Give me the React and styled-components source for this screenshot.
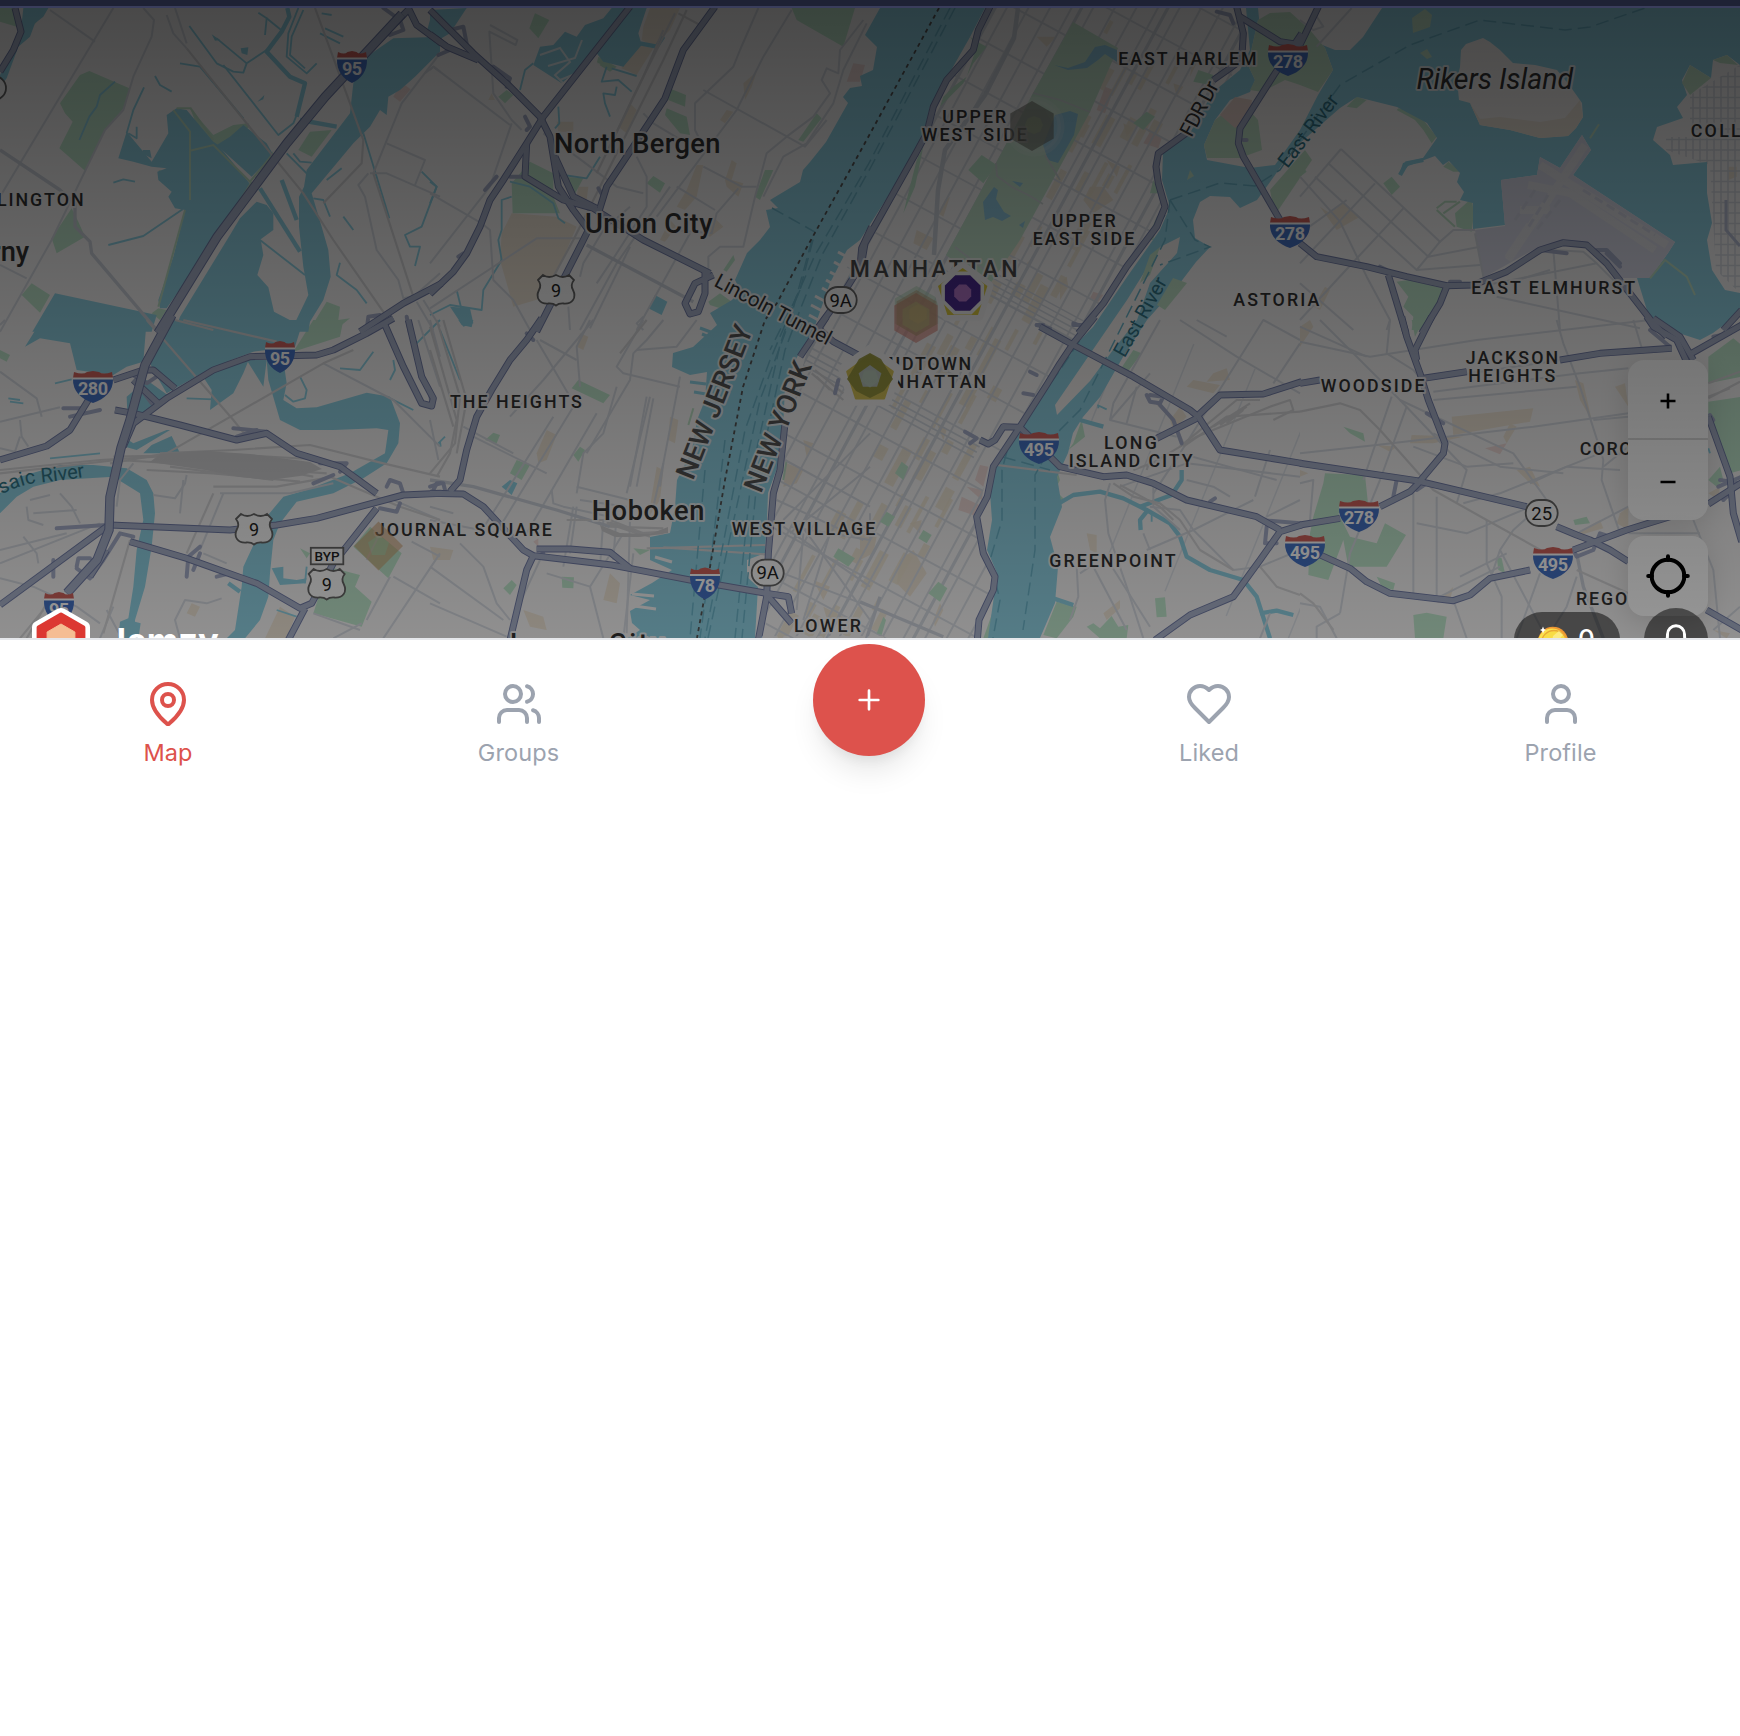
import React from "react";
import styled, { createGlobalStyle } from "styled-components";

const GlobalStyle = createGlobalStyle`
  * { box-sizing: border-box; }
  body { margin: 0; background: #fff; font-family: Inter, "Liberation Sans", sans-serif; }
  button { border: 0; padding: 0; background: none; font: inherit; color: inherit; cursor: pointer; }
`;

const Page = styled.main`
  display: flex;
  flex-direction: column;
  min-height: 1736px;
  background: #fff;
`;
const TopStrip = styled.div`
  height: 8px;
  background: #1e2235;
  border-bottom: 2px solid #3a3e5c;
`;
const MapStage = styled.section`
  position: relative;
  height: 630px;
  overflow: hidden;
  background: #f5f4f4;
`;
const MapCanvas = styled.svg`
  display: block;
  width: 1740px;
  height: 630px;
`;
const Shade = styled.div`
  position: absolute;
  inset: 0;
  background: linear-gradient(to bottom, rgba(0, 0, 0, 0.7), rgba(0, 0, 0, 0.41));
  pointer-events: none;
`;
const MapControls = styled.div`
  position: absolute;
  top: 352px;
  right: 32px;
  width: 80px;
  display: flex;
  flex-direction: column;
  gap: 16px;
`;
const ControlCard = styled.div`
  display: flex;
  flex-direction: column;
  border-radius: 16px;
  overflow: hidden;
  background: #fff;
  box-shadow: 0 6px 30px rgba(0, 0, 0, 0.14);
`;
const ControlButton = styled.button`
  height: ${(p) => p.$height || 80}px;
  padding-top: ${(p) => p.$drop || 0}px;
  display: flex;
  align-items: center;
  justify-content: center;
  color: #000;
  & + & { border-top: 2px solid #dcdcdc; }
`;
const Brand = styled.div`
  position: absolute;
  left: 31px;
  top: 598px;
  display: flex;
  align-items: center;
  gap: 15px;
  height: 68px;
  color: #fff;
  font-size: 34.5px;
  font-weight: 700;
`;
const Badges = styled.div`
  position: absolute;
  right: 32px;
  top: 600px;
  display: flex;
  align-items: flex-start;
  gap: 24px;
  height: 64px;
  color: #fff;
`;
const CoinPill = styled.div`
  width: 106px;
  height: 60px;
  margin-top: 4px;
  border-radius: 28px;
  background: rgba(0, 0, 0, 0.5);
  display: flex;
  align-items: center;
  padding: 0 0 0 23px;
  gap: 9px;
  font-size: 26px;
  font-weight: 500;
`;
const CoinCount = styled.span`
  display: block;
  line-height: 32px;
  margin-top: -6px;
`;
const BellCircle = styled.div`
  width: 64px;
  height: 64px;
  border-radius: 50%;
  background: rgba(0, 0, 0, 0.5);
  display: flex;
  align-items: center;
  justify-content: center;
`;
const NavBar = styled.nav`
  height: 162px;
  border-top: 2px solid #e5e7eb;
  background: #fff;
  display: grid;
  grid-template-columns: 336px 365px 336px 344px 359px;
`;
const NavItem = styled.a`
  display: flex;
  flex-direction: column;
  align-items: center;
  padding-top: 40px;
  gap: 9px;
  color: ${(p) => (p.$active ? "#dd524c" : "#9ca3af")};
  font-size: 23.5px;
  line-height: 32px;
  letter-spacing: 0.1px;
`;
const AddButton = styled.button`
  justify-self: center;
  width: 112px;
  height: 112px;
  margin-top: 4px;
  border-radius: 50%;
  background: #dd524c;
  color: #fff;
  display: flex;
  align-items: center;
  justify-content: center;
  box-shadow: 0 20px 30px -6px rgba(0, 0, 0, 0.1), 0 8px 12px -4px rgba(0, 0, 0, 0.06);
`;

const LineIcon = ({ size = 48, children, weight = 2 }) => (
  <svg width={size} height={size} viewBox="0 0 24 24" fill="none" stroke="currentColor"
    strokeWidth={weight} strokeLinecap="round" strokeLinejoin="round">{children}</svg>
);

/* Map geometry is kept in eight sheets, each drawn at three times its final size. */
const sheets = [
  { x: 0, y: 0,
    water: [
      "M70,24L145,24 130,50 105,70 90,110 55,140 20,235 0,260 0,225 45,130 62,100Z",
      "M500,345L530,325 560,330 640,425 655,435 745,545 755,560 500,925 480,925 475,900 520,770 555,630 525,625 505,590 515,575 475,540 472,515 500,505 455,500 400,485 355,475 380,395 455,485 505,400Z",
      "M690,410L730,375 800,430 820,465 755,530 650,435Z",
      "M525,995L540,950 690,705 720,655 770,605 800,615 820,640 820,690 782,718 790,765 772,825 805,862 822,935 885,968 925,885 910,800 897,680 897,590 912,560 920,510 1050,340 1060,250 1070,220 1100,170 1180,115 1280,112 1320,95 1320,155 1245,230 1200,270 1165,290 1160,345 1140,330 1110,380 1060,430 985,520 935,580 965,680 985,750 992,830 970,900 930,965 925,995Z",
      "M165,880L470,945 455,995 97,995Z", "M1290,60L1325,30 1325,135 1280,95Z",
      "M635,103L660,120 645,122Z M722,145L745,142 742,165 725,160Z M772,305L793,285 790,298Z M428,450L450,450 455,475 430,462Z"],
    creeks: ["M862,24L868,50 845,95 800,155 870,230 915,250 890,350", "M780,565L900,755","M845,540L890,660","M900,360L1010,380"],
    streams: ["M568,78L650,190 700,215 730,218 740,190 800,150","M670,195L835,405 880,370 890,345","M540,190L600,200 730,355","M650,115L740,190","M325,735L430,708 548,628","M1090,400L1168,655","M775,38L800,55 795,105","M800,55L850,95","M895,24L865,100 860,170 920,220 950,190","M910,30L875,110 870,165 915,205","M960,100L1020,130 M975,85L1030,110 M965,40L995,45","M465,228L480,255 515,275","M340,548L370,538 405,545","M432,262L400,330 380,400","M238,420L268,350 290,320 300,285 345,245","M860,460L925,525","M880,460L900,485 935,488","M780,720L915,825","M1020,788L1010,825 1070,870 1100,910","M940,595L970,600 990,650","M1265,515L1310,560 1265,680 1215,705 1230,740 1260,740 1245,798","M1030,650L1060,690","M385,400L410,415 410,380","M1000,480 L940,560 M1025,505L980,540","M1245,170L1262,185"],
    parks: ["M180,310L240,225 268,213 388,265 375,320 315,390 255,512 178,445 218,365 195,340Z","M72,24L145,24 105,72 90,75Z","M0,24L45,24 50,80 0,65Z","M155,715L215,625 235,665 255,710 170,760Z","M65,885L95,850 150,885 120,938Z","M925,995L980,905 1020,920 1015,960 1050,955 1000,995Z","M895,450L930,395 995,390 935,470Z","M570,325L640,405 700,375 745,370 750,380 700,410 640,440 600,400Z","M740,460L820,455 800,480 745,490Z","M475,510L500,515 500,535Z","M720,480L750,478 750,490 725,490Z","M455,940L475,925 500,930 480,960Z"],
    blobs: [],
    pink: ["M1180,290L1205,248 1232,268 1200,305Z"],
    rim: ["M520,330L570,395 570,600","M570,452L640,435 750,545 820,460","M555,630L475,920","M755,545L690,650 520,925","M530,325L572,325 640,420"],
    roads: ["M340,24L0,590","M150,30L285,125","M430,24L462,60 455,110 400,230 370,330 315,390 155,720 0,995","M1320,160L1205,310 1120,520","M1160,430L1275,480 1245,555","M1110,520L1160,520 1320,590","M1105,520L1075,555 1095,590 1130,750 1195,840 1210,895 1280,880","M1275,220L1300,200 1320,215","M0,795L80,835","M525,24L560,130 M500,45L520,100 560,145","M1320,820L1240,890","M1250,905L1300,990 M1270,900L1320,980"],
    arterials: ["M0,450L180,570 225,610 225,680 270,725 275,760 470,990"],
    rails: ["M560,145L820,470 910,580 1000,720 1160,950","M945,24L1050,310 1090,420 1085,490 970,610","M1120,520L1240,890","M525,960L640,990"],
    highways: ["M45,24L63,95 40,150 0,215","M1225,24L1250,75 1325,130","M1325,850L1210,910 1080,995","M1230,24L1030,230 975,290 860,430 780,540 650,710 475,1000"],
    ramps: ["M1150,24L1200,60 1210,90 1170,105","M1100,990L1105,950 1140,945 1160,970","M1220,950L1230,1000"] },
  { x: 430, y: 0,
    water: ["M0,30L110,24 60,100 0,135Z","M405,95L440,110 465,75 520,55 545,24 650,24 625,100 635,135 580,200 520,185 500,160 395,250 310,195 330,140 370,135Z","M60,920L120,925 130,970 100,980Z","M675,885L712,905 695,945 655,925Z","M540,150L600,160 580,200Z"],
    creeks: ["M630,130L680,140 700,110"],
    streams: ["M545,205L620,228 M530,200L515,245 565,240 605,275 M560,260L555,285 520,280 525,310 540,350","M385,320L388,370 375,385","M215,780L205,720 215,690 215,600 245,590","M240,545L300,560 370,610 385,655 405,670","M215,780L160,870 155,930 60,915 0,945","M310,190L285,210 270,270","M400,525L470,535 510,470","M0,545L20,560 0,610","M80,870L95,930"],
    parks: ["M298,85L315,40 358,60 325,115Z","M1085,24L1275,24 1240,140 1100,60Z","M718,265L768,285 765,320 715,300Z","M710,325L770,350 780,405 750,400 705,345Z","M650,550L670,528 705,550 690,578Z","M245,550L300,485 370,520 370,590 390,640 248,640Z","M205,290L230,270 250,285 225,310Z","M400,530L460,535 430,590Z","M505,170L560,200 540,215 500,190Z","M1105,420L1160,340 1175,355 1120,425Z","M975,590L1005,510 1030,510 990,600Z","M880,810L910,765 915,780 890,815Z","M835,905L870,880 905,905 870,925 840,915Z"],
    blobs: ["M640,80L660,24 750,24 720,90 670,140 635,120Z","M600,130L670,145 620,225 575,205Z","M245,640L380,650 440,680 350,890 250,920 210,780 215,700Z","M445,560L475,560 470,600 440,590Z","M380,365L430,365 430,395 385,395Z","M820,495L800,590 765,630 740,620 770,570 800,495Z","M885,540L905,480 920,490 905,540 940,550 925,590 890,560Z","M940,250L980,215 965,260 945,300Z","M565,380L600,310 620,330 590,400Z","M870,360L890,330 910,335 885,370Z","M175,300L185,280 195,300Z","M690,720L720,660 740,680 705,725Z","M820,700L850,650 880,680 840,710Z"],
    pink: ["M1250,245L1270,190 1305,195 1290,245Z"],
    rim: [],
    roads: ["M180,75L262,120 257,135 178,95 190,280 245,360 275,390","M0,210L10,200 240,375","M985,24L930,150 910,200 795,310 795,390 830,460","M1085,30L1000,170 920,330 680,650","M820,270L1125,440 1190,360","M0,580L155,670 180,690 190,840 250,900 300,990","M245,370L180,560 0,790","M640,340L670,370 770,430","M620,470L650,530 650,620 560,760 500,850","M820,500L935,560 980,560","M640,580L560,560 440,470 340,400","M925,565L860,640 845,700 735,690","M740,560L855,630","M1300,60L1230,150 1225,220 1190,205 1175,240 1200,280 1150,350 1070,410 1010,460 975,590 940,740 870,740 835,770 835,830","M1310,70L1240,210 1210,310 1130,430 1060,470 1000,590","M0,925L320,715 450,715","M450,830L460,790 520,690 600,620","M415,920L420,990 M450,990L560,790 720,560","M620,990L780,700","M480,985L600,740","M640,950L620,970 640,990"],
    arterials: ["M470,735L790,905"],
    rails: ["M770,30L700,180 580,420 430,720 370,830","M735,40L610,290 540,440","M745,40L810,75","M700,90L640,230 500,520"],
    highways: ["M0,103L50,140 145,180","M0,30L130,160 230,250 330,350 360,410 385,560 430,630 475,690 460,720 320,995","M600,20L340,350 290,430 220,540 180,600 150,680 110,760 70,815 0,882","M855,20L760,150 705,295 590,470 530,560 505,640","M290,430L285,530 400,600 490,625 640,720 840,820","M850,825L795,850 765,910 780,942 805,935 825,880 825,815","M375,470L430,590 500,625","M1325,680L1295,745 1290,800 1240,880 1155,995"],
    ramps: ["M60,90L100,80 110,130","M25,165L60,150","M190,200L240,235 230,260","M285,350L300,380 290,390","M240,530L280,530","M165,570L200,530","M505,565L520,590","M85,770L100,760"] },
  { x: 860, y: 0,
    water: [],
    creeks: [], streams: [],
    parks: ["M330,110L350,140 320,230 280,260 250,290 240,320 310,250 340,190 380,140 360,130Z","M325,510L365,465 410,495 370,550Z","M860,335L885,350 850,390 820,370Z","M1015,210L1060,225 1050,255 1000,245Z","M170,480L190,440 165,560 130,640Z","M880,540L900,580 870,580Z","M900,640L880,720 860,720 890,650Z"],
    blobs: ["M690,560L730,560 760,600 700,640 670,600Z","M170,690L220,715 200,750 160,730Z","M530,110L590,110 560,140Z","M255,600L270,590 250,650 235,640Z","M500,790L520,770 510,800Z","M600,850L620,830 625,860 600,900Z","M740,480L780,500 770,530Z","M1000,160L1020,170 990,230Z","M940,250L970,260 950,290Z","M790,370L820,385 800,410Z"],
    pink: ["M710,330L735,260 760,270 735,340Z","M850,430L870,395 905,415 895,445Z","M700,875L730,885 715,905 690,895Z"],
    rim: [],
    roads: [],
    arterials: [],
    rails: [],
    highways: ["M390,20L355,90 340,150 260,240 220,320 200,400 170,455 60,650 15,730 5,790 -10,830","M1130,20L1150,100 1145,180 1060,240","M985,395L895,460 888,500 895,550 915,620 890,680 800,800 730,910 655,1000","M1140,50L1260,125 1325,135","M1325,100L1245,220 1140,385 1135,430 1150,470 1260,660"],
    ramps: ["M1070,35L1110,45 1120,70","M530,975L570,985","M640,975L670,975","M1150,420L1160,420"] },
  { x: 1300, y: 0,
    water: [],
    creeks: ["M370,480L320,490 300,525"], streams: [],
    parks: ["M295,325L350,335 410,410 395,430 370,390 345,360 290,330Z","M140,320L170,290 200,300 170,325Z","M250,550L275,530 300,560 275,585Z","M0,490L20,515 0,530Z","M430,500L445,485 485,515 460,515Z","M465,640L515,595 522,640 515,695 470,680Z","M290,845L325,840 430,865 415,920 370,990 335,990 340,950 310,920 325,890Z"],
    blobs: ["M725,24L840,24 830,50 785,55 725,45Z","M595,24L650,24 620,35Z","M60,620L90,640 130,610 180,650 110,690Z","M1285,500L1310,500 1310,530 1285,540Z","M75,860L90,870 60,930 40,920Z","M60,880L30,950"],
    pink: [], rim: ["M410,625L435,605 470,605","M410,630L465,680","M430,640L480,605","M1050,835L1095,780 1160,830 1185,885","M870,415L897,373"],
    roads: ["M123,447L0,590","M123,447L420,725 460,690 525,690","M85,490L385,770 540,740","M45,530L350,810 540,795","M225,550L0,790","M310,625L110,840 0,960","M420,725L350,810","M0,530L120,665 200,830 270,960 260,990","M525,700L550,830","M0,60L40,90 70,80 50,50","M155,24L50,140","M560,855L890,790 850,755 760,750 780,990","M590,890L1020,985","M620,850L750,810","M0,850L160,990","M890,790L1000,900","M0,700L140,600"],
    arterials: [], rails: [],
    highways: ["M55,20L0,135","M0,730L50,770 200,800 320,830 440,857 520,855 620,815 720,750 790,728 860,735 920,790 990,880 1060,970 1100,1010","M265,825L318,1000","M440,860L420,910 365,1000","M1325,930L1270,990"],
    ramps: ["M240,800L260,810","M890,750L920,750 960,790","M920,760L960,800","M450,845L480,845","M720,750L800,760"] },
  { x: 0, y: 320,
    water: ["M125,0L440,0 430,125 380,140 340,165 230,150 210,70 120,55 75,80Z","M520,0L910,0 885,80 760,95 640,140 500,220 460,150 445,120Z","M380,230L440,180 510,230 400,300 375,380 410,390 510,330 500,330 400,370 385,360Z","M430,400L540,400 515,348 455,375Z","M805,180L800,120 850,120 860,190 850,240 890,265 950,262 1100,218 1170,230 1200,310 1195,370 1160,430 1090,475 1000,520 890,545 840,610 820,660 810,760 805,830 780,900 735,955 680,955 705,930 725,800 730,740 800,590 850,530 920,510 1050,460 1155,400 1165,330 1130,325 1000,330 900,330 840,300Z","M0,520L60,470 180,435 280,435 380,445 440,480 460,520 465,580 455,680 440,770 435,800 405,900 405,905 422,910 415,955 355,955 360,905 385,895 400,800 410,690 430,600 420,520 340,470 180,480 100,500 50,530 0,580Z","M590,140L750,110 730,160 700,220 630,270 635,210Z","M740,120L800,120 790,200Z","M815,745L850,740 850,775 890,780 920,775 915,790 840,795Z"],
    creeks: ["M685,790L720,815"],
    streams: ["M165,190L215,178","M30,245L70,250 M25,235L60,240","M855,225L880,245 915,235 920,210 900,170","M1020,145L1080,150 1120,95","M1180,120L1185,150 1170,180","M1160,230L1240,270","M560,235L640,238","M915,790L920,740","M830,870L890,890","M300,400L150,415","M1320,0L1240,80"],
    parks: ["M880,95L940,0 1030,0 1020,50Z","M0,90L30,105 20,125 0,115Z","M985,740L1080,765 1065,800 1115,845 1085,920 940,880Z","M1060,680L1110,620 1205,700 1165,775Z","M900,685L930,700 920,715Z"],
    blobs: ["M560,880L575,850 600,860 585,890Z","M840,860L885,890 860,955 795,955Z","M1300,690L1320,690 1310,715Z"],
    pink: [], rim: [],
    roads: ["M0,15L15,0","M0,155L110,235 125,290","M0,305L180,262","M60,300L65,350 85,380 M60,350L45,395 0,385","M80,560L85,600 130,615 M90,540L150,525 M180,520L215,560 240,610 M100,580L230,570","M400,430L360,480 350,560","M460,525L525,535 555,490 560,465","M540,580L550,480 M660,520L870,520 1000,490","M670,520L600,690","M610,700L680,730","M0,730L300,610 M0,690L200,640","M0,775L100,800 230,860 300,910","M540,955L525,900 555,840 620,850 665,835","M1170,770L1100,900 M1140,640L1100,720","M1320,700L1150,955 M1180,770L1320,850 M1235,665L1320,710 M1085,910L1000,955 M940,880L1080,930","M1180,540L1320,600","M365,955L320,870 M300,955L340,860","M70,650L110,700 115,730","M970,130L1180,240 1320,380","M1255,0L1320,200 M1290,0L1320,110"],
    arterials: [],
    rails: ["M0,450L300,420 640,400 980,420","M0,460L350,420 700,440 980,460","M340,410L620,405 940,440","M440,450L640,460 900,485","M480,400L700,390 930,375 1150,430 1320,470","M330,430L500,400 970,130 1060,90","M510,440L820,480 M600,455L850,470 M650,400L800,450 M560,400L780,430 M620,410L940,470","M640,500L830,500 1000,470","M550,0L830,65 M440,0L570,150 700,300 740,350","M60,955L130,870 M80,955L140,850","M390,660L310,940","M990,470L1200,560 1320,600","M640,520L560,700"],
    highways: ["M0,420L140,378 210,330 265,240","M340,180L430,150 460,150 525,205","M345,270L400,280 540,315 710,360 800,340 890,400 1020,440 1130,520","M390,665L560,715 770,790 900,865 935,850 1000,730 1130,565","M915,865L865,960","M0,855L320,620","M330,615L690,630 830,615 950,595 1210,525 1325,520","M1180,-5L1100,40 1000,90 950,105 750,110 640,150 500,235 400,310 370,380","M515,-10L440,120 390,300 360,390 330,530 325,640 290,720 200,820","M1155,15L1210,140 1265,250 1295,258 1300,235 1265,170 1225,0","M400,180L480,255","M270,770L320,690"],
    ramps: ["M190,265L250,265 220,310","M210,290L300,270","M390,160L440,190 470,170","M410,190L455,250","M700,325L800,335","M710,350L770,330","M960,430L1040,430 1020,455","M940,490L1000,465","M1160,500L1170,480 1200,490 1210,520","M230,740L235,715 270,715","M230,745L270,775 310,720 360,640 400,650","M560,770L565,710 600,680","M580,750L600,700","M650,770L690,760","M170,625L320,615","M1290,500L1320,490","M160,720L160,770","M1140,565L1190,575 1200,550"] },
  { x: 430, y: 320,
    water: ["M215,500L240,480 262,490 245,525Z","M85,0L130,0 125,22 95,15Z"],
    creeks: [], streams: ["M30,30L90,180","M25,370L45,350 M30,365L32,380"],
    parks: ["M425,205L445,180 540,225 520,250Z","M165,360L190,338 210,345 200,370Z","M240,460L260,420 300,435 275,480Z","M430,405L450,380 465,390 445,425Z","M395,770L432,772 430,805 397,803Z","M220,805L245,780 260,795 240,825Z","M1210,710L1225,685 1275,715 1255,740Z","M610,685L660,690 630,705Z"],
    blobs: ["M320,400L350,330 380,345 350,420 325,430Z","M520,840L540,760 570,790 560,850Z","M660,560L680,440 700,450 690,540 650,600Z","M1070,430L1120,450 1100,490 1060,500Z","M440,80L450,40 475,50 460,90Z","M280,870L340,890 350,930 300,920Z","M720,290L745,300 735,370 715,360Z","M0,680L70,690 60,720 10,720Z","M1180,860L1240,890 1200,930Z","M1150,780L1200,800 1180,840Z","M1120,360L1150,370 1130,410Z"],
    pink: ["M310,665L325,655 325,680Z"], rim: ["M790,265L775,315","M1070,420L1060,480"],
    roads: ["M490,0L340,180 240,290","M330,60L440,120","M640,0L560,140 580,160 750,200","M700,0L650,60 610,100 600,180 470,400","M800,0L740,80 620,90","M660,230L590,520 M750,170L700,430 690,500","M650,230L600,500 M670,235L620,500","M440,520L460,400 520,340 560,200","M440,500L600,540 M450,540L590,560","M320,60L420,230 M480,0L440,80 450,200","M130,350L350,460 M100,320L250,400","M430,260L210,620 M370,290L150,640","M500,280L290,640","M0,600L200,640 M70,580L0,560","M0,740L220,900 M90,670L160,740 200,850 240,900","M520,600L510,740 M600,600L590,940 M430,560L400,740","M0,850L230,950 M330,720L260,870","M350,760L480,800 520,955 M480,800L580,640","M365,510L370,550 400,560 540,590","M1065,420L1320,560 M1040,540L1300,660","M1080,620L1320,660 1320,580","M1320,340L1060,600 M1320,440L1080,640","M1110,610L1320,900 M1060,760L1320,860 M1120,640L1100,870","M1060,620L1320,800 M1200,640L1120,900","M610,700L580,955 M0,300L25,420","M440,560L420,700 M560,580L550,720","M700,430L670,560"],
    arterials: ["M0,480L130,500 380,570 540,620"],
    rails: ["M0,20L80,300 60,400 20,470","M20,0L90,230 75,370 0,460","M0,90L70,320 M40,0L110,240 80,400","M410,600L540,600 640,640 700,640","M530,610L620,640 710,635 M540,620L700,625 M520,600L660,650","M650,685L1005,675 M700,682L1005,703","M1145,160L1240,240 M1155,150L1240,220","M1160,170L1200,210","M650,0L570,100"],
    highways: ["M335,-5L290,60 240,120 185,210 140,290 110,390 90,480 60,515","M0,520L100,522 160,560 280,690 310,707 545,735 650,755 780,780 1010,820 1075,830 1085,880","M320,687L420,687 540,697 600,745","M310,707L290,750 240,960","M1190,-10L1110,110","M1170,30L1210,65 1285,105","M1065,310L1050,450 1030,520 1015,700 1010,830 985,960","M1015,830L1085,910"],
    ramps: ["M0,215L5,260","M10,510L20,490 40,490 45,510","M320,710L340,700","M1215,220L1225,180","M290,40L310,60"] },
  { x: 860, y: 320,
    water: [],
    creeks: ["M580,560L640,525 720,515 790,535 860,570 930,610 960,650 980,710 1050,750 1150,780 1190,830 1230,955","M840,560L935,525 965,480 965,450","M860,575L840,600 842,630","M1200,880L1250,872 1300,885","M660,300L730,320","M580,835L640,855"],
    streams: ["M712,255L740,268 M715,255V265 M875,580V605"],
    parks: ["M820,90L845,100 800,160 780,150Z","M630,195L655,210 630,245 605,235Z","M105,460L125,425 145,440 130,480Z","M60,605L80,575 105,590 85,620Z","M175,655L190,630 215,645 200,670Z","M205,820L235,785 262,805 240,845Z","M885,835L915,832 920,890 890,892Z","M680,920L700,910 720,925 755,888 775,920 805,915 800,955 720,955Z","M550,945L590,845 650,860 640,890 590,955Z","M370,955L400,870 385,955Z","M570,520L590,445 600,480 585,510 615,540 590,545Z","M640,370L665,300 675,350 625,390Z","M50,940L70,890 78,900 65,945Z"],
    blobs: ["M980,200L1000,180 1080,195 1060,220Z","M1060,160L1100,145 1110,180 1040,185Z","M120,720L160,690 200,760 150,830 110,790Z","M680,640L710,645 710,700 690,690Z","M930,300L960,260 980,290 940,330Z","M0,640L50,650 40,700 0,720Z","M220,900L240,850 250,870 225,920Z","M730,880L780,840 780,865 740,900Z","M230,310L260,330 250,360Z","M150,610L185,600 180,640Z"],
    pink: ["M360,435L385,440 370,500 345,480Z","M305,530L370,560 355,590 295,570Z","M320,500L370,510 365,540Z"], rim: [],
    roads: ["M1320,60L1210,0 960,400 880,520","M1320,70L1240,190","M960,0L1130,110 1320,220","M900,0L760,250 750,300 950,350","M1010,0L1100,50","M870,160L750,300","M750,490L735,540 745,640 800,800 850,955","M780,500L980,430 1320,470","M960,400L1250,480 M1230,390L1185,530","M860,690L1000,630 1180,540 M1000,630L1120,750 1200,740 1320,690","M650,740L655,830 630,900 M660,760L690,740","M700,740L800,930","M880,490L880,560 960,630","M850,640L870,690","M1200,955L1230,880","M870,560L960,570 1000,630","M730,700L870,920","M830,200L800,310","M1320,540L1220,590","M980,480L1060,500 1110,530"],
    arterials: ["M0,845L250,950","M60,830L20,955"],
    rails: ["M970,380L1100,290 1320,275","M860,440L1010,350 1230,260 1290,240 1300,270 1240,300","M960,380L1130,240 1200,240","M1060,320L1170,250 M1080,315L1160,260 M1100,310L1150,270","M760,490L820,530 900,550 960,600 1020,690 1120,750","M780,495L900,560 940,600","M410,435L650,465","M870,420L860,450 M820,450L900,420","M1200,740L1250,800 1320,825","M890,250L940,300 970,370"],
    highways: ["M1010,290L1080,225 1210,222 1325,185","M890,355L1010,295","M705,-10L640,70 600,130 560,195 480,320 400,440 382,530 350,590 370,700 405,770 400,810 357,900 352,960","M540,20L640,75 820,170 990,270 1015,290 1080,390 1325,430","M360,360L385,372 405,360 430,320 480,322 530,370 600,440 730,470 800,465 880,490 980,540 1190,590 1260,630","M1325,615L1260,635 1200,720 1120,830 990,885 885,960"],
    ramps: ["M315,335L350,355 330,370","M530,15L550,15","M640,10L670,20","M490,220L520,225","M510,155L530,165","M1050,545L1065,535","M1220,620L1215,670 1250,670","M860,225L870,245 900,250 910,230 870,225","M900,255L940,300 965,370","M1200,600L1320,610"] },
  { x: 1300, y: 320,
    water: [], creeks: [], streams: ["M1190,30L1215,15 1225,40","M1225,385L1230,400"],
    parks: ["M75,460L195,465 205,560 115,580 150,650 230,670 255,610 318,645 260,740 145,740 130,660 85,780 25,765 30,640 40,590 70,490Z","M130,320L190,340 195,365 150,340Z","M1225,110L1300,55 1325,75 1325,170 1225,190Z","M1225,245L1325,230 1325,450 1290,460 1225,290Z","M820,600L860,590 870,610 825,615Z","M340,885L380,878 440,890 430,955 345,955Z","M590,710L605,715 615,760 595,750Z","M335,0L370,0 345,50Z","M230,770L285,790 280,810 245,800Z","M1225,480L1260,440 1270,480 1250,500Z"],
    blobs: ["M455,290L700,265 690,305 460,345Z","M0,20L30,0 40,20 0,80Z","M335,345L490,350 400,370 330,370Z","M230,375L290,380 270,395Z","M825,180L850,190 875,300 840,240Z","M945,200L975,190 985,260Z","M650,450L690,440 720,500 690,490Z","M830,640L900,600 910,625 840,645Z","M960,580L985,560 985,630 950,610Z","M1225,520L1260,500 1255,540Z","M610,350L630,310 650,320 620,370Z","M1240,930L1290,940 1280,955Z","M410,850L460,800 450,840Z","M0,450L25,460 0,470Z"],
    pink: ["M555,385L620,370 600,403Z"], rim: [],
    roads: ["M0,65L210,110 530,60 1050,0","M0,20L200,110","M400,215L840,160 985,145","M400,240L830,200","M375,180L985,90","M770,0L790,70 840,200 885,340 910,420 905,480 960,640","M60,0L300,240 640,400 740,540","M0,400L230,375 700,320 985,280","M300,240L500,450 470,550","M320,260L240,480 150,700 120,880","M275,230L210,420 190,480","M400,340L600,440 790,460","M410,530L410,830 M340,500L340,820","M270,0L260,100 340,150 380,200","M1000,0L1030,100","M490,550L600,520 900,400","M740,540L640,630 600,690 570,780","M600,690L740,955","M740,540L500,640 350,610","M560,600L560,730 605,830 605,955","M830,640L985,560","M420,830L600,740 M480,770L540,740 620,700","M120,880L50,920 50,955","M460,840L500,955","M650,955L720,760","M1180,600L1240,750 1260,955","M985,640L1200,640","M1240,930L1320,860","M880,300L985,290","M690,490L800,440 960,450","M340,380L500,440 640,430","M910,440L985,380","M740,955L800,860 830,770","M0,490L40,480 30,600","M0,850L60,860 110,955"],
    arterials: ["M830,700L850,800 910,955"],
    rails: ["M0,275L120,250 180,270 240,330 400,510 560,600 740,700","M1225,190L1320,155 M1225,235L1320,185 M1225,230L1290,205","M0,820L40,850 100,930","M830,750L985,820"],
    highways: ["M0,190L60,180","M370,175L500,155","M780,120L900,100 1115,85","M0,430L350,482 680,560","M770,620L830,645 870,660 930,690 985,725","M305,-10L320,50 360,160 385,240 435,370 430,400 350,495 330,515 240,560","M120,595L0,615","M395,-10L345,90 350,120","M50,700L150,745 200,785 270,820 460,842 510,825 570,775 690,750","M820,690L980,630 1110,590","M1040,-10L1060,20 1130,60 1160,125","M1060,-5L1140,50 1180,120","M1175,100L1325,15","M1225,290L1290,470 1300,580 1325,665","M1225,552L1325,488","M1220,870L1325,930"],
    ramps: ["M280,530L290,480","M350,510L380,490","M1050,30L1110,80","M1240,50L1290,40","M1255,500L1325,470","M820,690L830,710 880,690 900,640 930,650","M1260,480L1320,490 1270,540","M380,280L430,310","M1230,285L1240,300"] },
];

const hudson = "M880,8L865,35 877,47 873,70 860,76 862,86 850,88 843,97 848,103 826,142 810,162 803,170 800,182 770,200 778,208 766,210 770,227 760,240 747,253 735,280 740,290 732,300 710,313 717,325 693,347 673,353 672,367 690,375 707,372 705,400 697,420 692,450 677,480 675,507 670,533 650,537 650,560 672,570 652,583 630,595 650,600 630,611 632,623 640,630 628,638 755,638 758,587 747,577 747,560 765,553 767,520 768,493 780,460 783,430 785,387 797,357 810,340 817,320 830,283 847,250 860,240 903,173 922,140 930,107 953,67 970,37 985,8Z";
const eastRiver = "M1246,8L1250,50 1240,70 1213,92 1190,133 1163,153 1162,180 1170,207 1160,230 1127,277 1093,327 1073,347 1047,387 1020,427 997,460 990,493 992,520 987,550 997,573 993,603 988,638 1040,638 1055,603 1058,567 1050,537 1062,507 1057,477 1068,453 1073,433 1083,417 1100,397 1123,357 1147,320 1180,283 1196,262 1210,247 1195,238 1193,220 1200,202 1210,196 1230,197 1240,208 1257,200 1275,175 1292,150 1340,108 1357,97 1397,107 1427,123 1437,138 1423,158 1403,163 1399,175 1408,166 1435,156 1443,165 1449,161 1460,173 1457,182 1464,192 1460,200 1473,203 1473,229 1505,225 1501,180 1537,175 1540,157 1560,168 1582,135 1591,150 1573,175 1675,242 1668,253 1650,278 1637,278 1650,320 1660,327 1700,340 1713,333 1740,313 1740,293 1725,290 1712,270 1707,240 1712,223 1707,193 1707,162 1673,165 1670,155 1653,140 1657,127 1683,118 1677,107 1687,95 1682,80 1690,65 1711,78 1713,60 1727,55 1740,65 1740,8 1382,8 1363,37 1350,50 1335,50 1305,38 1260,28 1258,8Z";
const islands = [
  "M1258,20L1290,12 1310,30 1325,48 1333,70 1318,95 1300,130 1275,165 1250,168 1207,160 1204,145 1215,120 1230,100 1250,92 1255,80 1248,65Z",
  "M1461,50L1466,44 1483,38 1490,42 1500,50 1513,63 1535,65 1557,70 1570,86 1582,103 1583,117 1576,128 1568,136 1540,138 1510,130 1480,125 1475,114 1470,103 1459,100 1457,80 1460,67Z",
  "M1180,237L1160,247 1127,300 1055,405 1057,415 1090,381 1113,350 1137,320 1150,283 1177,253Z",
];
const islandParks = [
  "M1258,20L1270,13 1290,12 1310,30 1325,48 1333,70 1318,92 1300,85 1285,80 1262,92 1250,90 1255,80 1248,65Z",
  "M1215,120L1204,145 1207,158 1240,158 1262,150 1258,120 1240,100Z",
  "M1412,18L1425,9 1432,15 1430,27 1413,33Z", "M1420,53L1427,49 1432,57 1427,59Z",
  "M1690,65L1711,78 1690,95 1682,83Z", "M1713,60L1727,55 1738,65 1720,63Z", "M1187,180L1190,170 1194,176Z",
  "M1270,190L1305,150 1312,160 1275,215Z", "M1160,247L1150,275 1140,283 1150,255Z", "M1173,278L1187,283 1165,310 1157,305Z",
];
const centralPark = "M1073,22L1118,48 1090,112 1020,240 988,287 946,255 996,163 1033,93Z";
const parkWater = "M1054,65L1068,68 1085,62 1095,47 1105,45 1117,50 1117,62 1105,54 1098,60 1087,68 1068,70Z M1055,115L1070,111 1078,114 1074,135 1058,163 1048,160 1043,145Z M994,187L998,190 996,199 1004,212 1011,216 1002,221 993,217 985,220 983,202Z M1012,181L1023,183 1020,187Z M1019,225L1025,221 1023,228Z";
const airport = "M1475,230L1505,226 1501,180 1537,175 1540,157 1560,168 1582,135 1591,150 1573,175 1675,242 1668,253 1650,278 1620,278 1600,253 1567,240 1533,250 1483,278Z";
const runways = ["M1585,145L1508,260","M1540,165L1667,245","M1528,185L1570,193 1655,250","M1520,210L1550,210","M1530,225L1508,258"];
const stateLine = "M939,8L860,152 807,247 777,303 765,320 743,387 725,480 710,567 697,638";
const ferries = ["M950,8L868,165 815,255 795,300 780,345 752,470 735,638","M955,8L872,165 822,255 800,310 785,350 757,480 742,638","M812,240L790,320 760,400 725,560 708,638","M800,290L770,360 745,430 720,560 705,638","M772,208L815,232 800,290 770,350","M1170,200L1220,183 1255,186 1280,170 1300,140 1340,85 1410,45 1480,20 1565,30 1590,27 1645,8","M1170,200L1195,240 1210,247 1160,265","M1165,215L1140,250 1100,310 1060,370 1010,440 1002,470 1002,520 990,560 1000,600 993,638","M1170,200 L1165,240 1120,330 1080,410 1060,430 1035,475 1035,550 1023,630","M1003,457L1050,470","M705,470L690,638","M725,440L712,550 700,638"];

const clips = {
  manhattan: "M985,8L1238,8 1243,60 1190,133 1155,155 1165,210 1120,277 1068,347 1020,427 990,465 978,510 985,555 995,580 985,638 765,638 770,500 787,420 815,325 862,240 925,140 935,100 972,40Z",
  college: "M1690,95L1740,65 1740,293 1716,270 1710,165 1666,150 1666,137 1690,137Z",
  sunnyside: "M1085,350L1300,330 1300,640 1110,638Z",
};
const lines = (cx, cy, angle, gap, count, reach) => {
  const rad = (angle * Math.PI) / 180;
  const c = Math.cos(rad), s = Math.sin(rad);
  let d = "";
  for (let i = -count; i <= count; i += 1) {
    const ox = cx - s * gap * i, oy = cy + c * gap * i;
    d += `M${(ox - c * reach).toFixed(1)},${(oy - s * reach).toFixed(1)}L${(ox + c * reach).toFixed(1)},${(oy + s * reach).toFixed(1)}`;
  }
  return d;
};
const gridBlocks = Array.from({ length: 80 }, (_, i) => {
  const u = ((i * 37) % 23) / 23, v = ((i * 61) % 80) / 80;
  return { x: 1150 - v * 340 + u * 90 - 40, y: 20 + v * 600 + u * 45, h: 14 + (i % 4) * 9, w: 4 + (i % 3) * 3 };
});

const labels = [
  ["EAST HARLEM", 1119.3, 65, 137], ["UPPER", 943.3, 123.3, 62.7], ["WEST SIDE", 922.7, 141.3, 104],
  ["UPPER", 1052.7, 227, 62.7], ["EAST SIDE", 1033.7, 245, 100.3], ["ASTORIA", 1234.3, 306, 84.7],
  ["EAST ELMHURST", 1472.3, 294, 162.7], ["THE HEIGHTS", 451, 408, 130.7], ["JOURNAL SQUARE", 376, 536, 175.7],
  ["WEST VILLAGE", 732.7, 535.3, 142.3], ["LOWER", 795, 631.7, 65.7], ["MANHATTAN", 763, 650.5, 128],
  ["MIDTOWN", 879, 370, 92], ["MANHATTAN", 861, 388, 125], ["LONG", 1105, 449.3, 51.7], ["ISLAND CITY", 1069.7, 467.3, 122.6],
  ["GREENPOINT", 1050.3, 567.3, 125], ["WOODSIDE", 1321.7, 392, 102.6], ["JACKSON", 1466.7, 364, 91.3],
  ["HEIGHTS", 1469.3, 382, 85.7], ["CORONA", 1580.7, 455, 78], ["REGO PARK", 1577, 605, 108],
  ["COLLEGE POINT", 1691.7, 137, 158], ["ARLINGTON", -29, 205.7, 112.3],
];
const cities = [["North Bergen", 554, 152.7, 166.5], ["Union City", 585, 232.7, 127.5], ["Hoboken", 591.7, 519.7, 112.8], ["Kearny", -54, 260.7, 83], ["Jersey City", 502, 653, 162]];
const interstates = [["95", 352, 67], ["278", 1288, 60], ["278", 1290, 232], ["280", 93, 387], ["95", 280, 357], ["95", 59, 608], ["78", 705, 583.5], ["495", 1039, 448], ["278", 1359, 516], ["495", 1305, 551], ["495", 1553, 563]];

const Interstate = ({ n, x, y }) => {
  const w = n.length > 2 ? 20 : 15;
  return (
    <g transform={`translate(${x} ${y})`}>
      <path d={`M${-w},-8 C${-w - 0.5},4 ${-w * 0.6},12 0,16 C${w * 0.6},12 ${w + 0.5},4 ${w},-8Z`} fill="#4573c6" />
      <path d={`M${-w},-9 L${-w + 1},-15 Q${-w * 0.5},-12 ${-w * 0.3},-15 L0,-16 L${w * 0.3},-15 Q${w * 0.5},-12 ${w - 1},-15 L${w},-9Z`} fill="#d0625c" />
      <path d={`M${-w},-8.5H${w}`} stroke="#fff" strokeWidth="2" />
      <text y="8" textAnchor="middle" fill="#fff" fontWeight="700" fontSize="18" textLength={n.length > 2 ? 30 : 20}>{n}</text>
    </g>
  );
};
const UsRoute = ({ x, y }) => (
  <g transform={`translate(${x} ${y})`}>
    <path d="M-18,-10 L-13,-15 Q-7,-11 0,-15 Q7,-11 13,-15 L18,-10 Q14,-5 17,0 C21,8 16,14 8,13.5 Q3,13 0,15.5 Q-3,13 -8,13.5 C-16,14 -21,8 -17,0 Q-14,-5 -18,-10Z" fill="#fafafa" stroke="#666" strokeWidth="1.8" />
    <text y="7" textAnchor="middle" fontSize="18" fill="#222">9</text>
  </g>
);
const StateRoute = ({ n, x, y }) => (
  <g transform={`translate(${x} ${y})`}>
    <rect x="-16" y="-13" width="32" height="26" rx="13" fill="#fafafa" stroke="#666" strokeWidth="1.8" />
    <text y="6.5" textAnchor="middle" fontSize="18.5" fill="#222">{n}</text>
  </g>
);
const ngon = (n, r, cx, cy, turn = -90) =>
  Array.from({ length: n }, (_, i) => {
    const a = ((turn + (i * 360) / n) * Math.PI) / 180;
    return `${(cx + r * Math.cos(a)).toFixed(1)},${(cy + r * Math.sin(a)).toFixed(1)}`;
  }).join(" ");

const Layer = ({ part, ...style }) => (
  <g {...style}>
    {sheets.map((s) => (
      <g key={`${s.x}-${s.y}`} transform={`translate(${s.x} ${s.y}) scale(${1 / 3})`}>
        {s[part].map((d) => <path key={d} d={d} />)}
      </g>
    ))}
  </g>
);

const CityMap = () => (
  <MapCanvas viewBox="0 8 1740 630" fontFamily='Roboto, "Liberation Sans", sans-serif'>
    <defs>
      {Object.entries(clips).map(([id, d]) => <clipPath key={id} id={id}><path d={d} /></clipPath>)}
      <path id="passaic" d="M-62,545Q-5,484 46,482Q66,480 85,477" />
    </defs>
    <rect y="8" width="1740" height="630" fill="#f5f4f4" />
    <Layer part="blobs" fill="#efe5d6" />
    <Layer part="pink" fill="#efdad7" />
    <g clipPath="url(#manhattan)">
      {gridBlocks.map((b, i) => <rect key={i} x={b.x} y={b.y} width={b.w} height={b.h} fill="#eee3d0" opacity="0.8" transform={`rotate(28.4 ${b.x} ${b.y})`} />)}
      <path d={lines(1000, 300, 118.4, 19, 22, 700)} stroke="#d8dce2" strokeWidth="2" />
      <path d={lines(1000, 300, 28.4, 44, 18, 500)} stroke="#d8dce2" strokeWidth="1.9" />
      <path d={lines(1010, 300, 118.4, 76, 4, 700)} stroke="#d3d8df" strokeWidth="3.2" />
      <path d={lines(1040, 310, 28.4, 5.5, 2, 60)} stroke="#d3d8df" strokeWidth="1.5" />
      <path d={lines(880, 400, 28.4, 6, 1, 110)} stroke="#d3d8df" strokeWidth="1.7" />
      <path d="M1018,8L1014,38 985,95 945,150 938,190 934,255" stroke="#ced4dc" strokeWidth="4.5" fill="none" />
    </g>
    <g clipPath="url(#college)">
      <path d={lines(1700, 150, 90, 7, 14, 200)} stroke="#d5d9e0" strokeWidth="1.5" />
      <path d={lines(1700, 150, 0, 10.5, 16, 90)} stroke="#d5d9e0" strokeWidth="1.3" />
      <path d="M1726,200V230L1740,246" fill="none" stroke="#b9c0d6" strokeWidth="3" />
    </g>
    <g clipPath="url(#sunnyside)"><path d={lines(1210, 480, 112, 66, 3, 120)} stroke="#dde1e7" strokeWidth="1.5" /></g>
    <Layer part="parks" fill="#bfe6cc" />
    <path d={centralPark} fill="#c3e3cc" />
    <Layer part="water" fill="#90d2e4" />
    <path d={hudson} fill="#90d2e4" />
    <path d={eastRiver} fill="#90d2e4" />
    <Layer part="creeks" fill="none" stroke="#90d2e4" strokeWidth="13" strokeLinejoin="round" />
    <Layer part="streams" fill="none" stroke="#90d2e4" strokeWidth="5.5" strokeLinejoin="round" />
    <path d={parkWater} fill="#90c9e0" />
    <path d="M540,55L560,48 570,62 555,75 565,85M548,66L575,58 582,40M560,80L585,70 595,50M590,60L600,65M570,88L580,78" fill="none" stroke="#f5f4f4" strokeWidth="2" opacity="0.8" />
    {islands.map((d) => <path key={d} d={d} fill="#f3f0ee" />)}
    {islandParks.map((d) => <path key={d} d={d} fill="#c1e2c8" />)}
    <path d="M1470,103L1480,119 1500,117 1540,122 1565,118 1580,100 1583,117 1576,128 1568,136 1540,138 1510,130 1480,125Z" fill="#ece4d8" />
    <path d="M1220,115L1235,97 1252,100 1250,118 1235,128Z" fill="#e8d2cb" />
    <path d={airport} fill="#d9dae8" />
    <g fill="none" stroke="#e2e2e7" strokeWidth="8">{runways.map((d) => <path key={d} d={d} />)}</g>
    <path d="M1583,190L1655,235M1535,190L1515,220M1548,195L1528,228M1560,200L1535,232" stroke="#d2d4e2" strokeWidth="3" strokeDasharray="9 5" />
    <g stroke="#f5f4f4" strokeWidth="3">
      <path d="M822,288L838,297M826,280L842,289M830,272L845,280M834,262L850,271M838,252L853,260M815,296L832,305M811,305L828,314M809,315L822,322" />
      <path d="M705,380L697,377M706,392L694,388M704,403L690,399M672,562L655,557M672,575L652,570M654,596L632,594M656,609L634,606" />
    </g>
    <g fill="none" stroke="#90d2e4" strokeWidth="3"><path d="M700,328L716,334M702,334L716,340M690,382L706,384M694,392L706,394" /></g>
    <Layer part="rim" fill="none" stroke="#bddfc5" strokeWidth="6" />
    <Layer part="roads" fill="none" stroke="#d6dae1" strokeWidth="6" strokeLinejoin="round" />
    <Layer part="arterials" fill="none" stroke="#cdd2db" strokeWidth="10" strokeLinejoin="round" />
    <Layer part="rails" fill="none" stroke="#d6d6d8" strokeWidth="6.5" strokeLinejoin="round" />
    <path d="M600,525L620,533 650,534 668,527 668,533 640,537 615,537 602,531Z" fill="#cfcfd1" />
    <path d="M160,454L205,451 250,454 310,462 322,469 300,476 270,480 240,477 205,470 150,462Z" fill="#d2d2d4" />
    <path d="M1033,93L1060,100 1090,112M996,163L997,176 1012,187 1030,196 1043,204M1045,155L1060,180M955,247L985,270" fill="none" stroke="#cdd5d5" strokeWidth="1.8" />
    <g fill="none" stroke="#6cb4c9" strokeWidth="1.5" strokeDasharray="13 6">{ferries.map((d) => <path key={d} d={d} />)}</g>
    <path d={stateLine} fill="none" stroke="#555" strokeWidth="1.8" strokeDasharray="4 4" />
    <Layer part="ramps" fill="none" stroke="#a7afca" strokeWidth="12" strokeLinejoin="round" strokeLinecap="round" />
    <Layer part="highways" fill="none" stroke="#707ba6" strokeWidth="21" strokeLinejoin="round" />
    <Layer part="highways" fill="none" stroke="#a9b2ca" strokeWidth="15.5" strokeLinejoin="round" />
    <path d="M402,14L325,97 287,143 217,237 158,333M172,315L145,365 130,420 121,448 110,497 109,530 97,560 67,593" fill="none" stroke="#707ba6" strokeWidth="9.5" />
    <path d="M402,14L325,97 287,143 217,237 158,333M172,315L145,365 130,420 121,448 110,497 109,530 97,560 67,593" fill="none" stroke="#a9b2ca" strokeWidth="7.5" />

    <g fill="#333" stroke="#f5f4f4" strokeOpacity="0.85" strokeWidth="4" strokeLinejoin="round" paintOrder="stroke" fontWeight="500">
      {labels.map(([t, x, y, w]) => <text key={t + x} x={x - 1} y={y} fontSize="17.8" textLength={w + 1.2}>{t}</text>)}
      {cities.map(([t, x, y, w]) => <text key={t} x={x} y={y} fontSize="27.3" textLength={w}>{t}</text>)}
      <text x="849.7" y="277.3" fontSize="23" textLength="168" fill="#4a4a4a">MANHATTAN</text>
      <text x="1416.5" y="89" fontSize="28.5" fontWeight="400" fontStyle="italic" textLength="156.5">Rikers Island</text>
      <text transform="translate(693 481) rotate(-68.3)" fontSize="27.5" textLength="163" fill="#555">NEW JERSEY</text>
      <text transform="translate(761 494) rotate(-68.2)" fontSize="27.5" textLength="138" fill="#555">NEW YORK</text>
      <text transform="translate(713 285.5) rotate(27.8)" fontSize="20.5" fontWeight="400" textLength="129">Lincoln Tunnel</text>
      <text transform="translate(1191.5 138) rotate(-62)" fontSize="20.5" fontWeight="400" textLength="59">FDR Dr</text>
    </g>
    <g fill="#327688" fontSize="20">
      <text transform="translate(1287.5 169) rotate(-52.8)" textLength="86">East River</text>
      <text transform="translate(1124.5 358.5) rotate(-60.6)" textLength="88">East River</text>
      <text><textPath href="#passaic" startOffset="100%" textAnchor="end">Passaic River</textPath></text>
    </g>
    {interstates.map(([n, x, y]) => <Interstate key={`${x}`} n={n} x={x} y={y} />)}
    <UsRoute x={556} y={290} /><UsRoute x={254} y={529} /><UsRoute x={326.7} y={584} />
    <StateRoute n="9A" x={840.7} y={300} /><StateRoute n="9A" x={767.7} y={572.7} /><StateRoute n="25" x={1541.7} y={513} />
    <circle cx="-6" cy="88" r="12" fill="#fafafa" stroke="#666" strokeWidth="1.8" />
    <rect x="310.8" y="547.8" width="32.5" height="16.5" fill="#fafafa" stroke="#666" strokeWidth="1.8" />
    <text x="327" y="561" fontSize="13.5" fontWeight="500" textAnchor="middle" fill="#222">BYP</text>

    <g>
      <circle cx="1034.5" cy="126.5" r="26.5" fill="#eee" fillOpacity="0.16" stroke="#eee" strokeOpacity="0.18" strokeWidth="7" />
      <polygon points={ngon(6, 25, 1032, 126)} fill="#6f7068" opacity="0.62" />
      <polygon points={ngon(6, 19, 1035, 126, 0)} fill="#8a8f8a" opacity="0.3" />
      <polygon points={ngon(8, 9, 1034, 125)} fill="#a9b68a" opacity="0.35" />
    </g>
    <g>
      <polygon points={ngon(6, 25, 916.5, 311)} fill="#b5d8bb" opacity="0.55" />
      <polygon points={ngon(6, 25, 916, 318)} fill="#d98075" opacity="0.6" />
      <polygon points={ngon(6, 23, 916.5, 313)} fill="#b59a6e" opacity="0.45" />
      <polygon points={ngon(6, 15.5, 916, 317)} fill="#c6bd84" opacity="0.7" />
      <polygon points={ngon(6, 10, 918, 314)} fill="#d3bd80" opacity="0.5" />
    </g>
    <g>
      <polygon points={ngon(5, 27, 962.7, 294)} fill="#f0efef" stroke="#f0efef" strokeWidth="10" strokeLinejoin="round" />
      <polygon points={ngon(5, 26, 962.7, 294)} fill="#dac840" />
      <polygon points={ngon(8, 21.5, 962.7, 293, 22.5)} fill="#f0efef" stroke="#f0efef" strokeWidth="3" />
      <polygon points={ngon(8, 19.3, 962.7, 293, 22.5)} fill="#4b2b91" />
      <polygon points={ngon(8, 9.2, 962.7, 293, 22.5)} fill="#b174c6" />
    </g>
    <g>
      <polygon points={ngon(5, 27, 870, 378)} fill="#f5f4f4" stroke="#f5f4f4" strokeWidth="12" strokeLinejoin="round" />
      <polygon points={ngon(5, 24, 870, 379)} fill="#d9c659" stroke="#d9c659" strokeWidth="2" strokeLinejoin="round" />
      <polygon points="870,353 881,359 893,379 884,391 870,398 856,391 847,379 859,359" fill="#98973f" opacity="0.92" />
      <polygon points={ngon(5, 12, 870, 377)} fill="#b9c3bd" />
      <polygon points={ngon(5, 9.5, 870, 378, 90)} fill="#bccdbc" />
    </g>
    <g opacity="0.5">
      <polygon points={ngon(4, 24.5, 378.5, 546)} fill="#cf9a62" />
      <polygon points={ngon(5, 11, 378.5, 546)} fill="#b5bb84" />
    </g>
  </MapCanvas>
);

const Controls = () => (
  <MapControls>
    <ControlCard>
      <ControlButton aria-label="Zoom in" $height={78} $drop={4}><svg width="16" height="16"><path d="M8,0.5V15.5M0.5,8H15.5" stroke="currentColor" strokeWidth="2.6" /></svg></ControlButton>
      <ControlButton aria-label="Zoom out" $height={82} $drop={4}><svg width="16" height="16"><path d="M0.5,8H15.5" stroke="currentColor" strokeWidth="2.6" /></svg></ControlButton>
    </ControlCard>
    <ControlCard>
      <ControlButton aria-label="My location">
        <svg width="44" height="44" viewBox="0 0 44 44" fill="none" stroke="currentColor" strokeWidth="4" strokeLinecap="round">
          <circle cx="22" cy="22" r="16.3" /><path d="M22,2.2V6M22,38V41.8M2.2,22H6M38,22H41.8" />
        </svg>
      </ControlButton>
    </ControlCard>
  </MapControls>
);

export default function App() {
  return (
    <Page>
      <GlobalStyle />
      <TopStrip />
      <MapStage>
        <CityMap />
        <Controls />
        <Shade />
        <Brand>
          <svg width="60" height="68" viewBox="-30 -34 60 68">
            <polygon points={ngon(6, 26, 0, 0.5)} fill="#fff" stroke="#fff" strokeWidth="13" strokeLinejoin="round" />
            <polygon points={ngon(6, 26, 0, 0.5)} fill="#dc3832" stroke="#dc3832" strokeWidth="3.8" strokeLinejoin="round" />
            <polygon points={ngon(6, 16, 0, 0)} fill="#f5bd93" stroke="#f5bd93" strokeWidth="1" strokeLinejoin="round" />
          </svg>
          <span>Jemzy</span>
        </Brand>
        <Badges>
          <CoinPill>
            <svg width="32" height="32" viewBox="0 0 32 32">
              <circle cx="16" cy="16" r="15.3" fill="#ee9733" />
              <circle cx="15" cy="16.5" r="14" fill="#fbe04c" />
              <circle cx="17" cy="17" r="12.5" fill="#f8dc45" stroke="#e9a935" strokeWidth="1.3" />
              <path d="M16,10L22,5 26,9 14,22Z" fill="#fcea80" />
              <path d="M6,0.5L7,3 9,4 7,5 6,7.5 5,5 3,4 5,3Z" fill="#fff" />
            </svg>
            <CoinCount>0</CoinCount>
          </CoinPill>
          <BellCircle>
            <LineIcon size={34} weight={2.1}>
              <path d="M6 8a6 6 0 0 1 12 0c0 7 3 9 3 9H3s3-2 3-9" /><path d="M10.3 21a1.94 1.94 0 0 0 3.4 0" />
            </LineIcon>
          </BellCircle>
        </Badges>
      </MapStage>
      <NavBar>
        <NavItem $active>
          <LineIcon>
            <path d="M20 10c0 4.993-5.539 10.193-7.399 11.799a1 1 0 0 1-1.202 0C9.539 20.193 4 14.993 4 10a8 8 0 0 1 16 0" />
            <circle cx="12" cy="10" r="3" />
          </LineIcon>
          <span>Map</span>
        </NavItem>
        <NavItem>
          <LineIcon>
            <path d="M16 21v-2a4 4 0 0 0-4-4H6a4 4 0 0 0-4 4v2" /><circle cx="9" cy="7" r="4" />
            <path d="M22 21v-2a4 4 0 0 0-3-3.87" /><path d="M16 3.13a4 4 0 0 1 0 7.75" />
          </LineIcon>
          <span>Groups</span>
        </NavItem>
        <AddButton aria-label="Add"><LineIcon size={32}><path d="M5 12h14M12 5v14" /></LineIcon></AddButton>
        <NavItem>
          <LineIcon><path d="M19 14c1.49-1.46 3-3.21 3-5.5A5.5 5.5 0 0 0 16.5 3c-1.76 0-3 .5-4.5 2-1.5-1.5-2.74-2-4.5-2A5.5 5.5 0 0 0 2 8.5c0 2.3 1.5 4.05 3 5.5l7 7Z" /></LineIcon>
          <span>Liked</span>
        </NavItem>
        <NavItem>
          <LineIcon><path d="M19 21v-2a4 4 0 0 0-4-4H9a4 4 0 0 0-4 4v2" /><circle cx="12" cy="7" r="4" /></LineIcon>
          <span>Profile</span>
        </NavItem>
      </NavBar>
    </Page>
  );
}
